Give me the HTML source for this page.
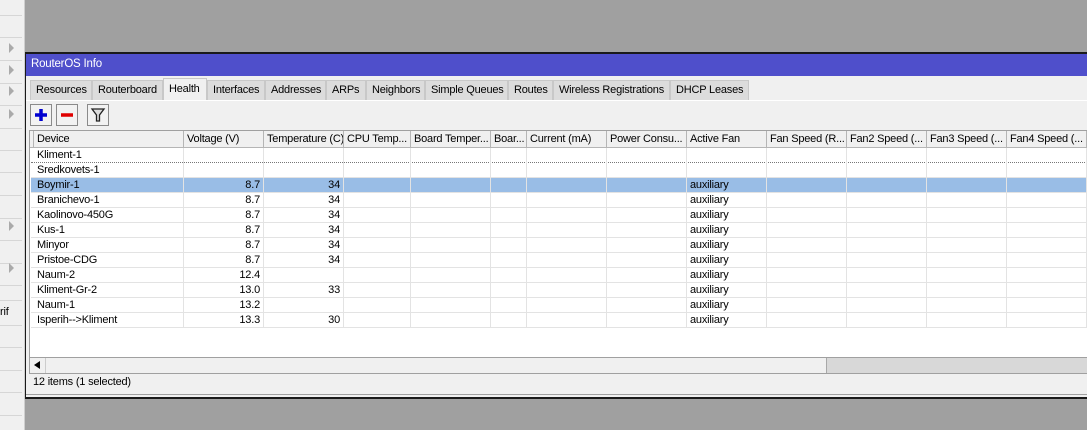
<!DOCTYPE html>
<html><head><meta charset="utf-8"><style>
*{margin:0;padding:0;box-sizing:border-box}
body{width:1087px;height:430px;overflow:hidden;background:#a0a0a0;font-family:"Liberation Sans",sans-serif;font-size:11px;letter-spacing:-0.2px;color:#000;position:relative}
.a{position:absolute}
.ln{position:absolute;left:0;width:22px;height:1px;background:#d6d6d6}
.ar{position:absolute;left:9px;width:0;height:0;border-left:5px solid #aaa;border-top:5px solid transparent;border-bottom:5px solid transparent}
.tab{position:absolute;top:80px;height:20px;background:#dcdcdc;border:1px solid #c8c8c8;border-bottom:none;padding:3px 0 0 5px;white-space:nowrap;overflow:hidden}
.btn{position:absolute;top:104px;width:22px;height:22px;background:#f2f2f2;border:1px solid #8a8a8a}
.hd{position:absolute;top:131px;height:17px;border-right:1px solid #b5b5b5;padding:2px 0 0 3px;white-space:nowrap;overflow:hidden;background:#f0f0f0}
.row{position:absolute;left:31px;width:1056px;height:15px;border-bottom:1px solid #e3e3e3}
.c{position:absolute;top:0;height:15px;border-right:1px solid #e3e3e3;white-space:nowrap;padding:1px 3px 0}
.r{text-align:right}
</style></head><body>
<div class="a" style="left:0;top:0;width:25px;height:430px;background:#f0f0f0;border-right:1px solid #cfcfcf"></div>
<div class="ln" style="top:15px"></div><div class="ln" style="top:37px"></div><div class="ln" style="top:60px"></div><div class="ln" style="top:83px"></div><div class="ln" style="top:105px"></div><div class="ln" style="top:128px"></div><div class="ln" style="top:150px"></div><div class="ln" style="top:172px"></div><div class="ln" style="top:195px"></div><div class="ln" style="top:218px"></div><div class="ln" style="top:240px"></div><div class="ln" style="top:263px"></div><div class="ln" style="top:285px"></div><div class="ln" style="top:300px"></div><div class="ln" style="top:325px"></div><div class="ln" style="top:347px"></div><div class="ln" style="top:370px"></div><div class="ln" style="top:392px"></div><div class="ln" style="top:415px"></div>
<div class="ar" style="top:43px"></div><div class="ar" style="top:65px"></div><div class="ar" style="top:86px"></div><div class="ar" style="top:109px"></div><div class="ar" style="top:221px"></div><div class="ar" style="top:263px"></div>
<div class="a" style="left:0;top:306px;font-size:11px">rif</div>

<div class="a" style="left:25px;top:52px;width:1062px;height:347px;background:#f0f0f0;border-top:2px solid #1a1a1a;border-left:1px solid #1a1a1a;border-bottom:2px solid #1a1a1a"></div>
<div class="a" style="left:26px;top:54px;width:1061px;height:22px;background:#4f4fcb;color:#fff;padding:4px 0 0 5px;font-size:11.5px">RouterOS Info</div>

<div class="tab" style="left:30px;width:62px">Resources</div>
<div class="tab" style="left:92px;width:71px">Routerboard</div>
<div class="tab" style="left:163px;top:78px;height:23px;width:44px;background:#f0f0f0;padding-top:4px">Health</div>
<div class="tab" style="left:207px;width:58px">Interfaces</div>
<div class="tab" style="left:265px;width:61px">Addresses</div>
<div class="tab" style="left:326px;width:40px">ARPs</div>
<div class="tab" style="left:366px;width:59px">Neighbors</div>
<div class="tab" style="left:425px;width:83px">Simple Queues</div>
<div class="tab" style="left:508px;width:45px">Routes</div>
<div class="tab" style="left:553px;width:117px">Wireless Registrations</div>
<div class="tab" style="left:670px;width:79px">DHCP Leases</div>
<div class="a" style="left:26px;top:100px;width:1061px;height:1px;background:#fff"></div>

<div class="btn" style="left:30px"><svg width="20" height="20"><path d="M10 4v12M4 10h12" stroke="#0000d0" stroke-width="3.5"/></svg></div>
<div class="btn" style="left:56px"><svg width="20" height="20"><path d="M4 10h12" stroke="#e00000" stroke-width="3.5"/></svg></div>
<div class="btn" style="left:87px"><svg width="20" height="20"><path d="M4 4h12l-4.5 6v6h-3v-6z" fill="#ddd" stroke="#222" stroke-width="1.3"/></svg></div>

<div class="a" style="left:29px;top:130px;width:1058px;height:244px;background:#fff;border:1px solid #a0a0a0;border-right:none"></div>
<div class="hd" style="left:30px;width:4px"></div>
<div class="hd" style="left:34px;width:150px">Device</div>
<div class="hd" style="left:184px;width:80px">Voltage (V)</div>
<div class="hd" style="left:264px;width:80px">Temperature (C)</div>
<div class="hd" style="left:344px;width:67px">CPU Temp...</div>
<div class="hd" style="left:411px;width:80px">Board Temper...</div>
<div class="hd" style="left:491px;width:36px">Boar...</div>
<div class="hd" style="left:527px;width:80px">Current (mA)</div>
<div class="hd" style="left:607px;width:80px">Power Consu...</div>
<div class="hd" style="left:687px;width:80px">Active Fan</div>
<div class="hd" style="left:767px;width:80px">Fan Speed (R...</div>
<div class="hd" style="left:847px;width:80px">Fan2 Speed (...</div>
<div class="hd" style="left:927px;width:80px">Fan3 Speed (...</div>
<div class="hd" style="left:1007px;width:80px">Fan4 Speed (...</div>
<div class="a" style="left:30px;top:147px;width:1057px;height:1px;background:#b5b5b5"></div>

<div id="rows"></div>
<script>
var d=[["Kliment-1","","",""],["Sredkovets-1","","",""],["Boymir-1","8.7","34","auxiliary"],["Branichevo-1","8.7","34","auxiliary"],["Kaolinovo-450G","8.7","34","auxiliary"],["Kus-1","8.7","34","auxiliary"],["Minyor","8.7","34","auxiliary"],["Pristoe-CDG","8.7","34","auxiliary"],["Naum-2","12.4","","auxiliary"],["Kliment-Gr-2","13.0","33","auxiliary"],["Naum-1","13.2","","auxiliary"],["Isperih-->Kliment","13.3","30","auxiliary"]];
var cols=[[3,150],[153,80],[233,80],[313,67],[380,80],[460,36],[496,80],[576,80],[656,80],[736,80],[816,80],[896,80],[976,80]];
var h="";
d.forEach(function(r,i){var t=148+i*15;var bg=i==2?"background:#99bde6;":"";var bb=i==0?"border-bottom:1px dotted #777;":"";
h+='<div class="row" style="top:'+t+'px;'+bg+bb+'">';
cols.forEach(function(c,j){var tx="",cl="c";if(j==0)tx=r[0];if(j==1){tx=r[1];cl="c r"}if(j==2){tx=r[2];cl="c r"}if(j==8)tx=r[3];
h+='<div class="'+cl+'" style="left:'+c[0]+'px;width:'+c[1]+'px">'+tx.replace(/>/g,"&gt;")+'</div>';});
h+='</div>';});
document.getElementById("rows").innerHTML=h;
</script>

<div class="a" style="left:30px;top:357px;width:1057px;height:17px;background:#d8d8d8;border-top:1px solid #a0a0a0;border-bottom:1px solid #a0a0a0"></div>
<div class="a" style="left:30px;top:358px;width:16px;height:15px;background:#f0f0f0;border-right:1px solid #ccc"></div>
<div class="a" style="left:34px;top:361px;width:0;height:0;border-right:6px solid #000;border-top:4px solid transparent;border-bottom:4px solid transparent"></div>
<div class="a" style="left:46px;top:358px;width:781px;height:15px;background:#f0f0f0;border-right:1px solid #a8a8a8"></div>
<div class="a" style="left:33px;top:376px">12 items (1 selected)</div>
<div class="a" style="left:26px;top:394px;width:1061px;height:1px;background:#a0a0a0"></div>
</body></html>
